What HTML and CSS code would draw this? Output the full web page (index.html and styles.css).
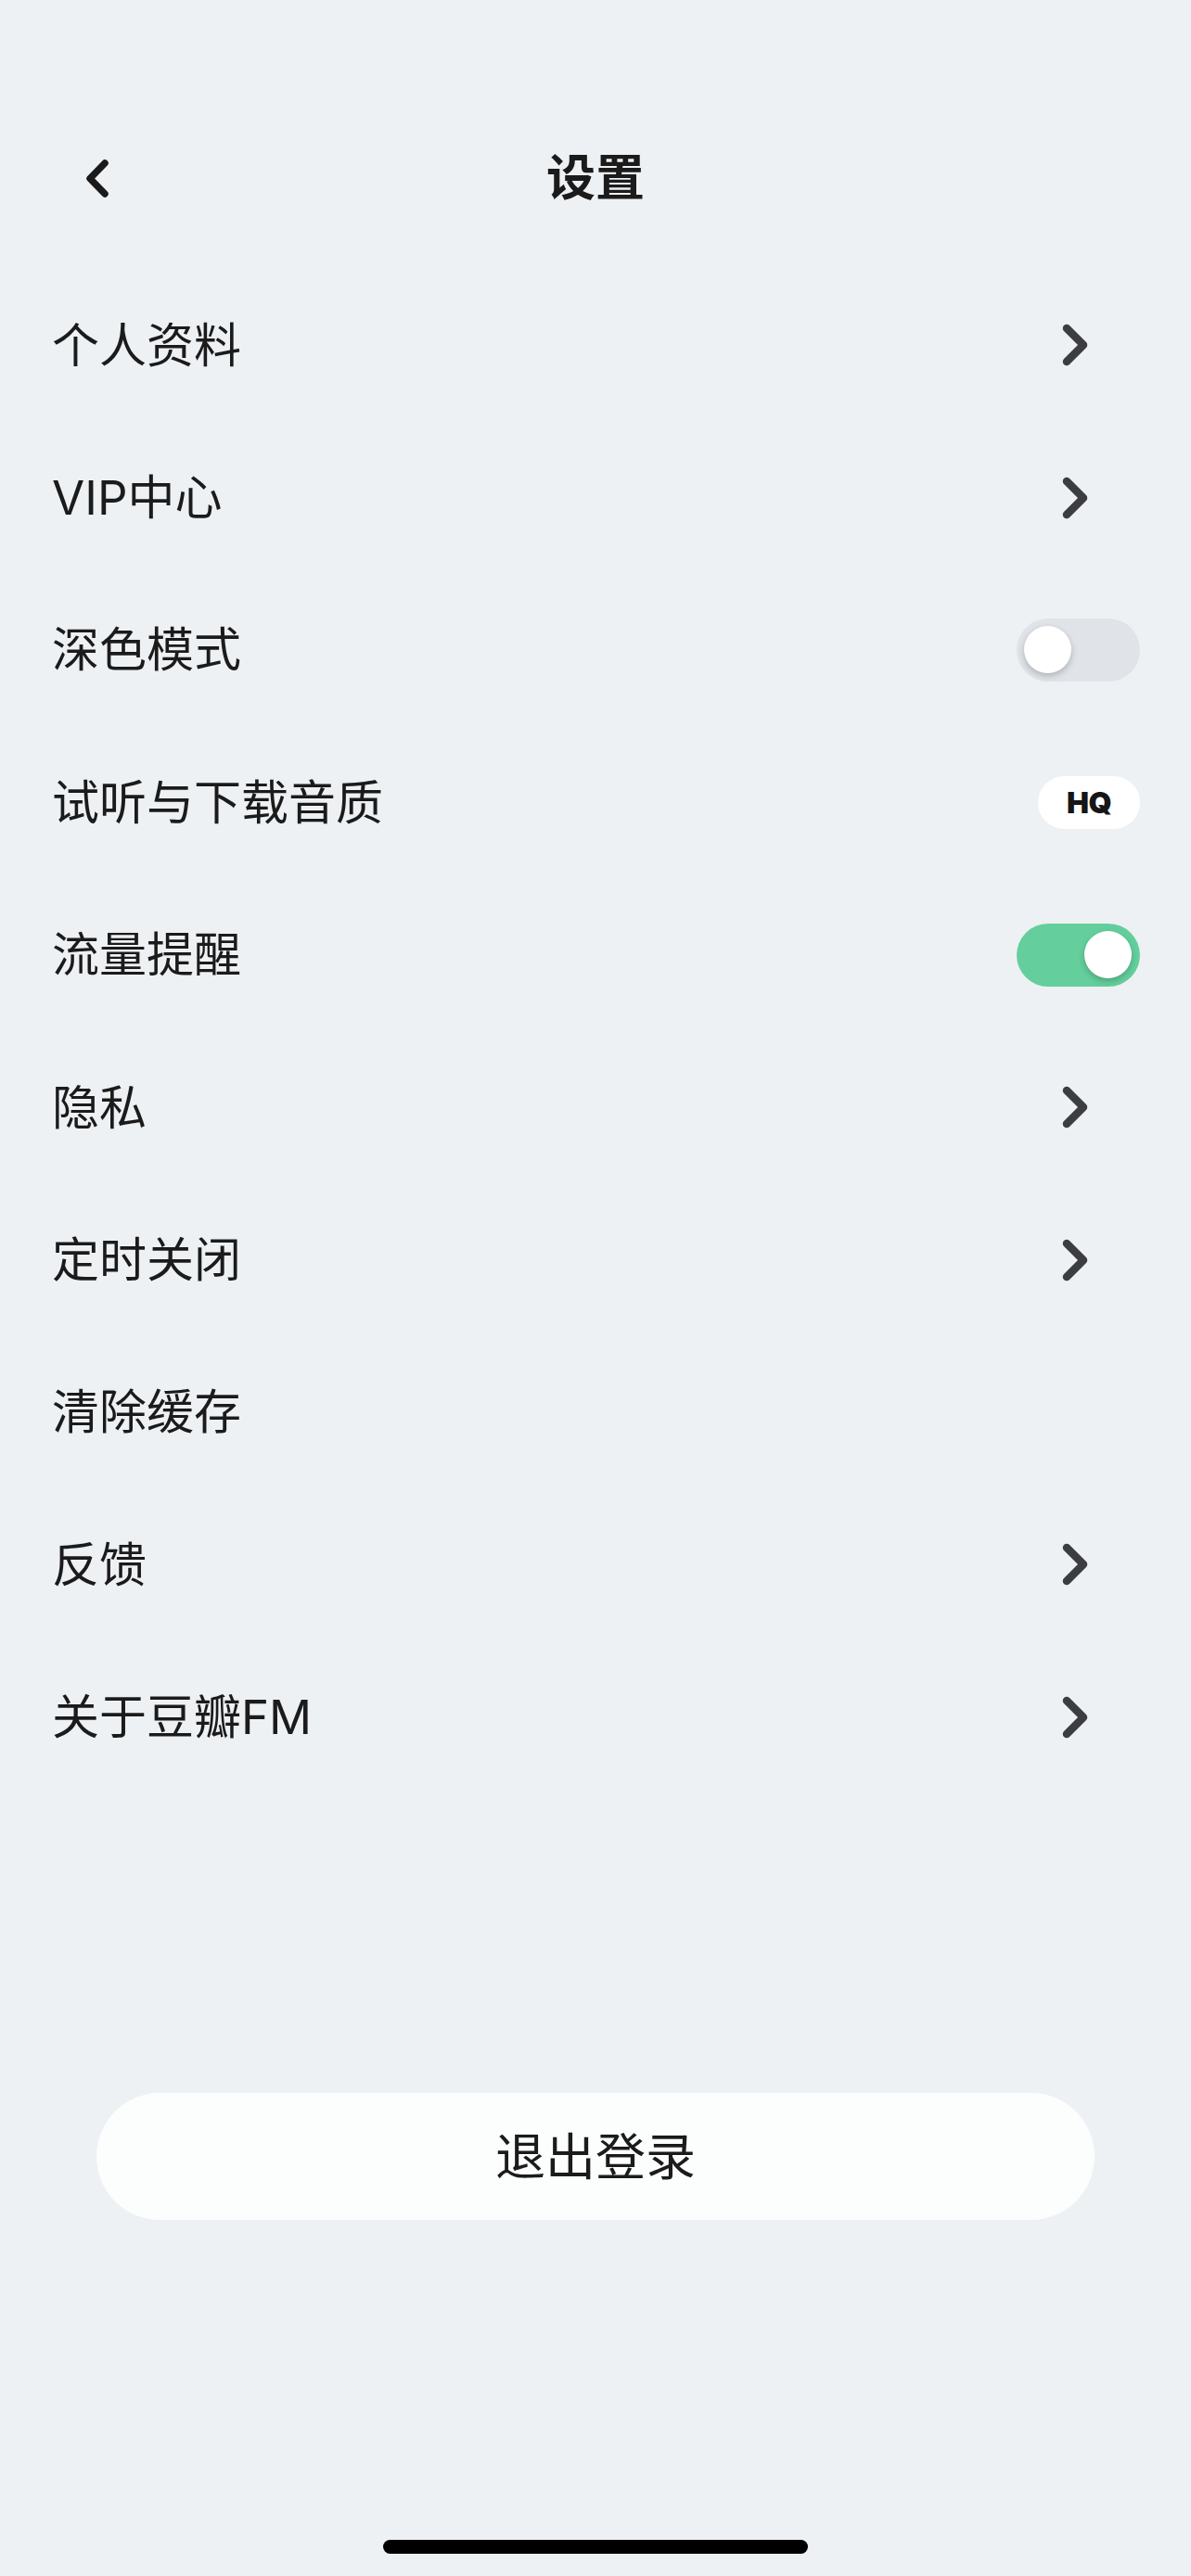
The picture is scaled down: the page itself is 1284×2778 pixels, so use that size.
FILE: index.html
```html
<!DOCTYPE html>
<html lang="zh-CN">
<head>
<meta charset="utf-8">
<title>设置</title>
<link rel="stylesheet" href="styles.css">
</head>
<body>
<div class="page">
  <header class="header">
    <div class="nav">
      <button class="back" aria-label="返回">
        <svg width="24" height="41" viewBox="0 0 24 41"><polyline points="20,4 4,20.5 20,37" fill="none" stroke="#1a1a1a" stroke-width="7.5" stroke-linecap="round" stroke-linejoin="round"/></svg>
      </button>
      <h1 class="title">设置</h1>
      <span class="nav-spacer"></span>
    </div>
  </header>

  <ul class="list">
    <li class="row"><span class="label">个人资料</span><span class="chev"><svg width="28" height="46" viewBox="0 0 28 46"><polyline points="5,5 23,23 5,41" fill="none" stroke="#3c3d41" stroke-width="8.5" stroke-linecap="round" stroke-linejoin="round"/></svg></span></li>
    <li class="row"><span class="label">VIP中心</span><span class="chev"><svg width="28" height="46" viewBox="0 0 28 46"><polyline points="5,5 23,23 5,41" fill="none" stroke="#3c3d41" stroke-width="8.5" stroke-linecap="round" stroke-linejoin="round"/></svg></span></li>
    <li class="row"><span class="label">深色模式</span><span class="toggle off"><span class="knob"></span></span></li>
    <li class="row"><span class="label">试听与下载音质</span><span class="badge">HQ</span></li>
    <li class="row"><span class="label">流量提醒</span><span class="toggle on"><span class="knob"></span></span></li>
    <li class="row"><span class="label">隐私</span><span class="chev"><svg width="28" height="46" viewBox="0 0 28 46"><polyline points="5,5 23,23 5,41" fill="none" stroke="#3c3d41" stroke-width="8.5" stroke-linecap="round" stroke-linejoin="round"/></svg></span></li>
    <li class="row"><span class="label">定时关闭</span><span class="chev"><svg width="28" height="46" viewBox="0 0 28 46"><polyline points="5,5 23,23 5,41" fill="none" stroke="#3c3d41" stroke-width="8.5" stroke-linecap="round" stroke-linejoin="round"/></svg></span></li>
    <li class="row"><span class="label">清除缓存</span></li>
    <li class="row"><span class="label">反馈</span><span class="chev"><svg width="28" height="46" viewBox="0 0 28 46"><polyline points="5,5 23,23 5,41" fill="none" stroke="#3c3d41" stroke-width="8.5" stroke-linecap="round" stroke-linejoin="round"/></svg></span></li>
    <li class="row"><span class="label">关于豆瓣FM</span><span class="chev"><svg width="28" height="46" viewBox="0 0 28 46"><polyline points="5,5 23,23 5,41" fill="none" stroke="#3c3d41" stroke-width="8.5" stroke-linecap="round" stroke-linejoin="round"/></svg></span></li>
  </ul>

  <div class="logout-wrap">
    <button class="logout">退出登录</button>
  </div>

  <div class="home-wrap"><div class="home-indicator"></div></div>
</div>
</body>
</html>
```

FILE: styles.css
```css
* { box-sizing: border-box; }
html, body {
  margin: 0;
  padding: 0;
  background: #eef1f4;
}
body {
  font-family: "Inter", "Noto Sans CJK SC", sans-serif;
  color: #1b1b1b;
}
.page {
  width: 1284px;
  height: 2778px;
  overflow: hidden;
  display: flex;
  flex-direction: column;
}
.header {
  height: 290px;
  padding-top: 132px;
}
.nav {
  height: 120px;
  display: flex;
  align-items: center;
  justify-content: space-between;
  padding-left: 93px;
  padding-right: 93px;
}
.back {
  width: 24px;
  height: 41px;
  padding: 0;
  border: 0;
  background: none;
  display: flex;
}
.nav-spacer { width: 24px; }
.title {
  margin: 0 0 8px 0;
  font-family: "Noto Sans CJK SC", sans-serif;
  font-size: 53px;
  font-weight: 700;
  color: #1b1b1b;
  line-height: 1;
}
.list {
  list-style: none;
  margin: 0;
  padding: 0;
}
.row {
  height: 164.4px;
  display: flex;
  align-items: center;
  justify-content: space-between;
  padding-left: 56px;
  padding-right: 55px;
}
.label {
  font-size: 51px;
  line-height: 1;
  color: #1b1b1b;
}
.chev {
  display: flex;
  margin-right: 56px;
}
.toggle {
  width: 133px;
  height: 68px;
  border-radius: 34px;
  display: flex;
  align-items: center;
}
.toggle.off {
  background: #e0e3e7;
  justify-content: flex-start;
  padding-left: 8px;
}
.toggle.on {
  background: #64cf9d;
  justify-content: flex-end;
  padding-right: 9px;
}
.knob {
  width: 51px;
  height: 51px;
  border-radius: 50%;
  background: #ffffff;
  box-shadow: 0 3px 7px rgba(0, 0, 0, 0.22);
}
.badge {
  width: 110px;
  height: 57px;
  border-radius: 29px;
  background: #ffffff;
  display: flex;
  align-items: center;
  justify-content: center;
  font-family: "Inter", sans-serif;
  font-weight: 900;
  font-size: 32px;
  letter-spacing: -0.5px;
  color: #161616;
}
.logout-wrap {
  margin-top: 323px;
  padding: 0 104px;
}
.logout {
  width: 100%;
  height: 137px;
  border: 0;
  border-radius: 69px;
  background: #fcfdfd;
  font-family: "Noto Sans CJK SC", sans-serif;
  font-size: 54px;
  color: #1b1b1b;
  display: flex;
  align-items: center;
  justify-content: center;
  padding: 0 0 6px 0;
}
.home-wrap {
  margin-top: 345px;
  display: flex;
  justify-content: center;
}
.home-indicator {
  width: 458px;
  height: 15px;
  border-radius: 8px;
  background: #000000;
}
```
